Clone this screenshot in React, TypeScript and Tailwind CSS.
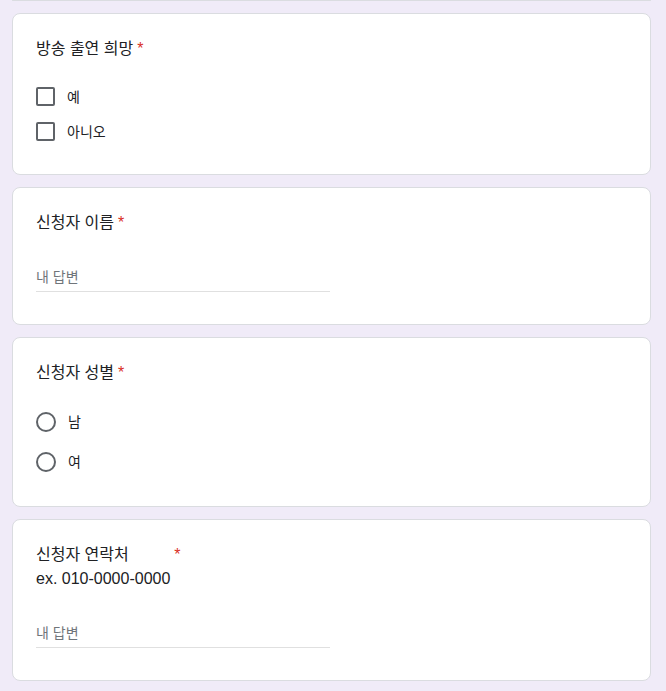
import React from "react";

const font = { fontFamily: '"Liberation Sans", "Noto Sans CJK KR", sans-serif' };

function Star() {
  return <span className="text-[#d93025] pl-1">*</span>;
}

function Card({ children, className = "" }: { children: React.ReactNode; className?: string }) {
  return (
    <div className={`rounded-lg border border-[#dadce0] bg-white px-[23px] pt-[23px] ${className}`}>
      {children}
    </div>
  );
}

function Checkbox({ label }: { label: string }) {
  return (
    <div className="flex h-[35px] items-center">
      <div className="h-[19px] w-[19px] rounded-[2px] border-2 border-[#5f6368]" />
      <span className="ml-3 text-[14px] leading-5 text-[#202124]">{label}</span>
    </div>
  );
}

function Radio({ label }: { label: string }) {
  return (
    <div className="flex h-10 items-center">
      <div className="h-5 w-5 rounded-full border-2 border-[#5f6368]" />
      <span className="ml-3 text-[14px] leading-5 text-[#202124]">{label}</span>
    </div>
  );
}

function TextInput() {
  return (
    <div className="mt-[32px] w-[294px] border-b border-[#e0e0e0] pb-[4px] mb-2">
      <div className="h-5 text-[14px] leading-5 text-[#70757a]">내 답변</div>
    </div>
  );
}

export default function App() {
  return (
    <div className="min-h-[691px] bg-[#f0ebf8] pb-3" style={font}>
      <div className="ml-3 flex w-[639px] flex-col gap-3">
        <div className="h-px rounded-b-lg border-x border-b border-[#dadce0] bg-white" />
        <Card className="pb-[25px]">
          <div className="text-[16px] leading-6 text-[#202124]">
            방송 출연 희망
            <Star />
          </div>
          <div className="mt-[18px]">
            <Checkbox label="예" />
            <Checkbox label="아니오" />
          </div>
        </Card>
        <Card className="pb-6">
          <div className="text-[16px] leading-6 text-[#202124]">
            신청자 이름
            <Star />
          </div>
          <TextInput />
        </Card>
        <Card className="pb-6">
          <div className="text-[16px] leading-6 text-[#202124]">
            신청자 성별
            <Star />
          </div>
          <div className="mt-[17px]">
            <Radio label="남" />
            <Radio label="여" />
          </div>
        </Card>
        <Card className="pb-6">
          <div className="flex items-start text-[#202124]">
            <div className="text-[16px] leading-6">
              <div>신청자 연락처</div>
              <div>ex. 010-0000-0000</div>
            </div>
            <span className="text-[16px] leading-6 text-[#d93025] pl-1">*</span>
          </div>
          <TextInput />
        </Card>
      </div>
    </div>
  );
}
